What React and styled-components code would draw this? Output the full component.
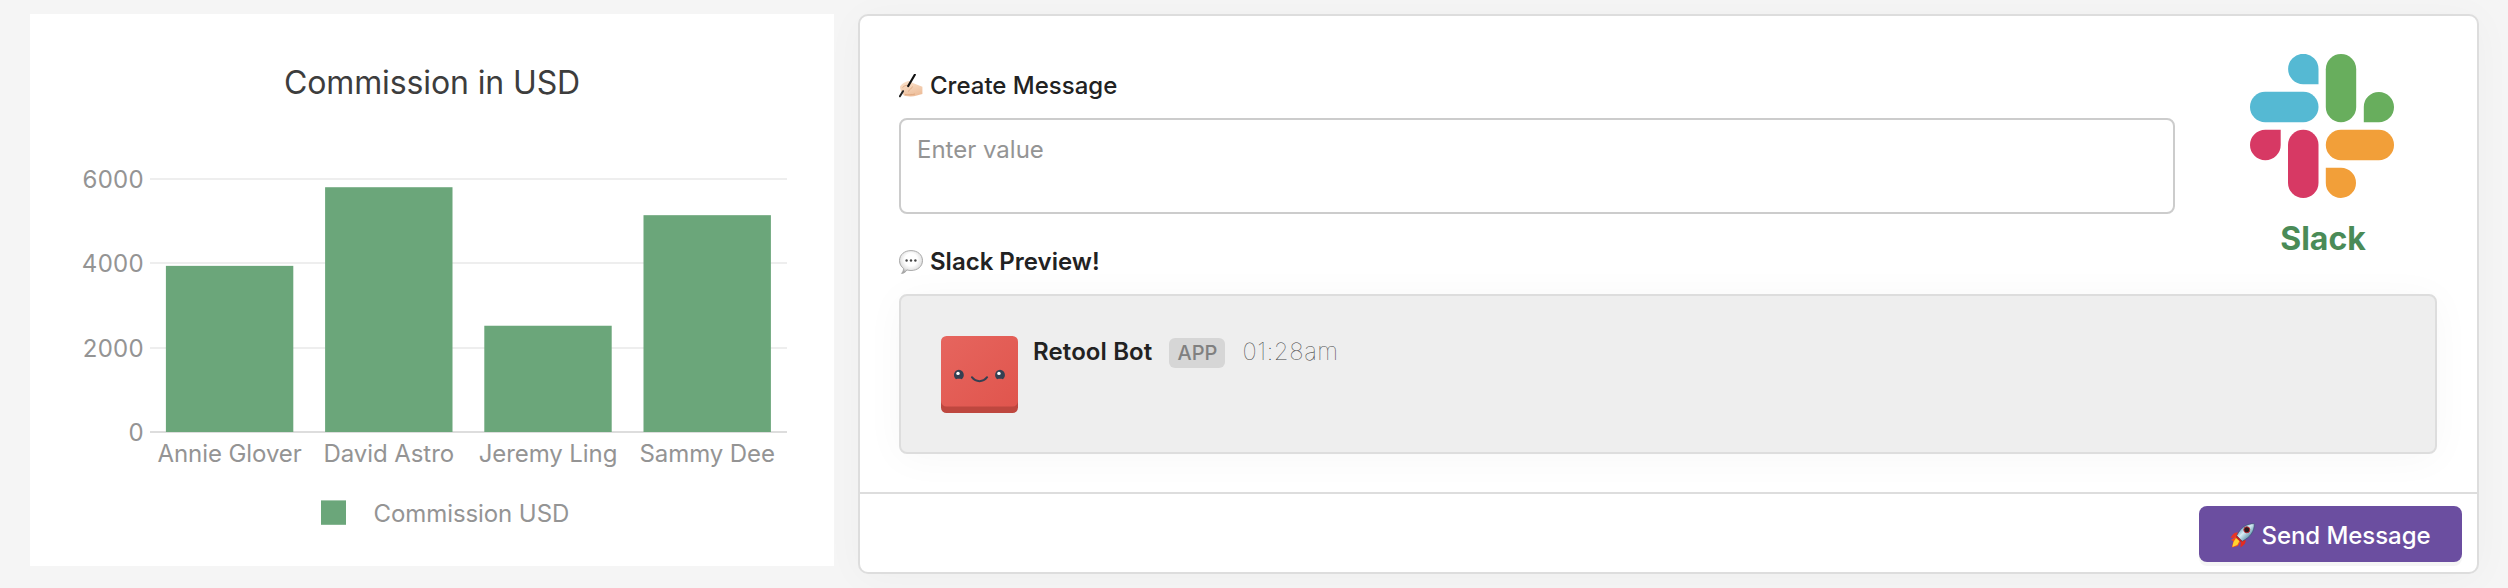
import React from "react";
import styled, { createGlobalStyle } from "styled-components";

const GlobalStyle = createGlobalStyle`
  * { box-sizing: border-box; }
  body {
    margin: 0;
    background: #f5f5f5;
    font-family: Inter, "Liberation Sans", sans-serif;
    color: #222;
  }
`;

const Page = styled.main`
  display: flex;
  align-items: flex-start;
  gap: 24px;
  width: 2508px;
  height: 588px;
  padding: 14px 29px 0 30px;
  overflow: hidden;
`;

const ChartCard = styled.section`
  flex: 0 0 804px;
  height: 552px;
  background: #fff;
`;

const ChartSvg = styled.svg`
  display: block;
`;

const ChartTitle = styled.text`
  font-size: 32px;
  letter-spacing: -0.12px;
  fill: #3d3d3d;
  text-anchor: middle;
`;

const ChartLabel = styled.text`
  font-size: 24px;
  letter-spacing: ${(p) => p.$tracking || "-0.08px"};
  fill: #949494;
  text-anchor: ${(p) => p.$anchor || "middle"};
`;

const MessageCard = styled.section`
  flex: 0 0 1621px;
  height: 560px;
  display: flex;
  flex-direction: column;
  background: #fff;
  border: 2px solid #ddd;
  border-radius: 10px;
  box-shadow: 0 4px 40px rgba(0, 0, 0, 0.03);
`;

const Body = styled.div`
  height: 476px;
  padding: 0 40px 0 39px;
`;

const TopRow = styled.div`
  display: flex;
  height: 278px;
`;

const Fields = styled.div`
  width: 1276px;
  padding-top: 56px;
`;

const Label = styled.div`
  display: flex;
  align-items: center;
  gap: 7px;
  height: 28px;
  margin-bottom: 18px;
  font-size: 24px;
  line-height: 28px;
  font-weight: ${(p) => p.$weight};
`;

const TextArea = styled.textarea`
  display: block;
  width: 100%;
  height: 96px;
  margin: 0 0 34px;
  padding: 16px 16px;
  border: 2px solid #ccc;
  border-radius: 8px;
  background: #fff;
  font: 400 24px/28px Inter, sans-serif;
  resize: none;
  outline: none;
  &::placeholder { color: #949494; opacity: 1; }
`;

const Brand = styled.div`
  display: flex;
  flex-direction: column;
  align-items: center;
  width: 144px;
  margin-left: 75px;
  padding-top: 38px;
`;

const BrandName = styled.div`
  margin-top: 23px;
  padding-left: 2px;
  font-size: 32px;
  line-height: 36px;
  font-weight: 700;
  color: #4a8b57;
`;

const Preview = styled.div`
  display: flex;
  height: 160px;
  padding: 40px;
  border: 2px solid #ddd;
  border-radius: 8px;
  background: #eee;
  box-shadow: 0 4px 40px rgba(0, 0, 0, 0.035);
`;

const Meta = styled.div`
  display: flex;
  align-items: flex-start;
  height: 30px;
  margin: 2px 0 0 15px;
  font-size: 24px;
  line-height: 28px;
`;

const BotName = styled.span`
  font-weight: 600;
  letter-spacing: 0.12px;
`;

const AppTag = styled.span`
  width: 56px;
  height: 30px;
  margin: 0 17px;
  border-radius: 6px;
  background: #d6d6d6;
  color: #808080;
  font-size: 20px;
  font-weight: 500;
  line-height: 30px;
  text-align: center;
`;

const Time = styled.time`
  font-weight: 100;
  letter-spacing: 0.6px;
  color: #444;
`;

const Footer = styled.footer`
  display: flex;
  justify-content: flex-end;
  flex: 1;
  padding: 12px 15px 0 0;
  border-top: 2px solid #ddd;
`;

const SendButton = styled.button`
  display: flex;
  align-items: center;
  justify-content: center;
  gap: 6px;
  width: 263px;
  height: 56px;
  padding: 3px 0 0;
  border: 0;
  border-radius: 8px;
  background: #6b4ea0;
  box-shadow: 0 4px 0 rgba(0, 0, 0, 0.04);
  color: #fff;
  font: 500 24px/28px Inter, sans-serif;
  letter-spacing: -0.06px;
`;

const BASE = 418;
const sales = [
  { name: "Annie Glover", value: 3940 },
  { name: "David Astro", value: 5805 },
  { name: "Jeremy Ling", value: 2520 },
  { name: "Sammy Dee", value: 5142 },
];
const toY = (v) => BASE - (v / 6000) * 253;

function CommissionChart() {
  return (
    <ChartSvg width="804" height="552" viewBox="0 0 804 552">
      <ChartTitle x="402" y="80">Commission in USD</ChartTitle>
      {[6000, 4000, 2000, 0].map((v) => (
        <g key={v}>
          <line x1="120" x2="757" y1={Math.round(toY(v))} y2={Math.round(toY(v))} stroke={v ? "#eee" : "#ddd"} strokeWidth="2" />
          <ChartLabel x="114" y={Math.round(toY(v)) + 9} $anchor="end" $tracking="0.3px">{v}</ChartLabel>
        </g>
      ))}
      {sales.map((s, i) => (
        <g key={s.name}>
          <rect x={135.9 + i * 159.2} y={toY(s.value)} width="127.4" height={BASE - toY(s.value)} fill="#6ba67a" />
          <ChartLabel x={199.6 + i * 159.2} y="448">{s.name}</ChartLabel>
        </g>
      ))}
      <rect x="291" y="486.4" width="25" height="24.4" fill="#6ba67a" />
      <ChartLabel x="343.5" y="508" $anchor="start">Commission USD</ChartLabel>
    </ChartSvg>
  );
}

function SlackLogo() {
  return (
    <svg width="144" height="144" viewBox="0 0 144 144">
      <g fill="#55b9d3">
        <path d="M68.5 30.2H53.2a15.2 15.2 0 1 1 15.3-15.2z" />
        <rect x="0" y="37.8" width="68.5" height="30.4" rx="15.2" />
      </g>
      <g fill="#68ae5d">
        <rect x="75.8" y="0" width="30.4" height="68.2" rx="15.2" />
        <path d="M113.8 68.2V53a15.1 15.1 0 1 1 15.1 15.2z" />
      </g>
      <g fill="#d73964">
        <path d="M30.7 75.8V91a15.35 15.2 0 1 1-15.4-15.2z" />
        <rect x="38" y="75.8" width="30.5" height="68.2" rx="15.2" />
      </g>
      <g fill="#f29f39">
        <rect x="75.8" y="75.8" width="68.2" height="30.4" rx="15.2" />
        <path d="M75.8 113.8H91a15.1 15.1 0 1 1-15.2 15.1z" />
      </g>
    </svg>
  );
}

function WritingHandIcon() {
  return (
    <svg width="24" height="24" viewBox="0 0 24 24">
      <defs>
        <linearGradient id="skin" x1="0" y1="0" x2="0.4" y2="1">
          <stop offset="0" stopColor="#fbe5d0" />
          <stop offset="1" stopColor="#eebf9c" />
        </linearGradient>
      </defs>
      <path d="M1 12.5C3 9.3 6 8 8.5 7.2c2-.6 3.2.2 4.7 1.600 3.200 1.200 7 2.600 10.200 4v7.300c-2 .6-3.800.8-5.400 1.400-3.500 1.300-7.600 1.200-11.500.6-1.600-.3-2.500-1.300-2.300-2.600C2 17.500 1 15 1 12.500z" fill="url(#skin)" />
      <path d="M3.500 13.500c2.200-2.200 4.500-2.700 6.500-1.700M9 17.500c2-2 3.500-3 4.500-5M6 20.500c3 .4 7 .5 10-.5" stroke="#d79d76" strokeWidth=".7" fill="none" />
      <path d="M15.800.8 9.200 12" stroke="#111" strokeWidth="2.200" strokeLinecap="round" />
      <path d="M4 17.200.9 22.300" stroke="#222" strokeWidth="2" strokeLinecap="round" />
    </svg>
  );
}

function SpeechIcon() {
  return (
    <svg width="24" height="24" viewBox="0 0 24 24">
      <defs>
        <radialGradient id="bubble" cx=".5" cy=".4" r=".6">
          <stop offset=".45" stopColor="#fff" />
          <stop offset=".75" stopColor="#e6e6e6" />
          <stop offset="1" stopColor="#aaa" />
        </radialGradient>
      </defs>
      <path d="M12 .6c6.500 0 11.500 4 11.500 10S18.500 20.500 12 20.500c-1.400 0-2.900-.2-4.200-.6-.9 2-2.700 3.300-5.300 3.500 1.400-1.300 2.100-2.900 2-4.900C2 16.600.5 14 .5 10.600c0-6 5-10 11.500-10z" fill="url(#bubble)" stroke="#a4a4a4" strokeWidth=".9" />
      <g fill="#444"><circle cx="7.600" cy="10.500" r="1.200" /><circle cx="12" cy="10.500" r="1.200" /><circle cx="16.400" cy="10.500" r="1.200" /></g>
    </svg>
  );
}

function RocketIcon() {
  return (
    <svg width="25" height="25" viewBox="0 0 25 25">
      <defs>
        <linearGradient id="hull" x1="0" y1="0" x2="1" y2="1">
          <stop offset=".1" stopColor="#347aa6" />
          <stop offset=".45" stopColor="#d8edf4" />
          <stop offset=".75" stopColor="#6295ad" />
          <stop offset="1" stopColor="#31506b" />
        </linearGradient>
      </defs>
      <path d="M8 9.500C4.500 9 2.500 11 .6 15l6-.5z" fill="#ea3525" />
      <path d="M15.500 16.500c.8 3-1 5.500-5 8l.3-6z" fill="#e32b20" />
      <path d="M6 13.500.8 17l2.500 1-1.500 6.500L8 23l3-5z" fill="#f04c22" />
      <path d="m6 15-2.500 4-1.200 5 5-2 2.200-4z" fill="#ffd52f" />
      <path d="M24.200.7c-7.500.1-13 3-17.500 12l5.600 5.500C20.500 14 24.400 8.500 24.200.7z" fill="url(#hull)" stroke="#31516d" strokeWidth=".6" />
      <path d="m6.700 12.700 5.600 5.500-1.700.7-4.800-4.700z" fill="#bc2723" />
      <circle cx="16.800" cy="6.800" r="3" fill="#29191d" stroke="#bd2c36" strokeWidth="1" />
    </svg>
  );
}

function BotAvatar() {
  return (
    <svg width="77" height="77" viewBox="0 0 76 77" preserveAspectRatio="none">
      <defs>
        <linearGradient id="face" x1="0" y1="0" x2="1" y2="1">
          <stop offset="0" stopColor="#e6655e" />
          <stop offset="1" stopColor="#e0554d" />
        </linearGradient>
      </defs>
      <rect y="8" width="76" height="69" rx="5.500" fill="#be473f" />
      <rect width="76" height="70.500" rx="5.500" fill="url(#face)" />
      <g fill="#354052">
        <path d="M14.800 43.200c-1.300-1.100-2-2.500-2-4.200a4.850 5.200 0 0 1 9.700 0c0 1.700-.7 3.100-2 4.200-1.800-.6-3.900-.6-5.700 0z" />
        <path d="M55.400 43.200c-1.300-1.100-2-2.500-2-4.200a4.850 5.200 0 0 1 9.700 0c0 1.700-.7 3.100-2 4.200-1.800-.6-3.900-.6-5.700 0z" />
      </g>
      <circle cx="16.800" cy="37.400" r="1.700" fill="#fff" />
      <circle cx="57.200" cy="37.400" r="1.700" fill="#fff" />
      <path d="M30.500 41.200c4 5.300 11 5.300 15 0" fill="none" stroke="#354052" strokeWidth="2" strokeLinecap="round" />
    </svg>
  );
}

export default function App() {
  return (
    <>
      <GlobalStyle />
      <Page>
        <ChartCard>
          <CommissionChart />
        </ChartCard>
        <MessageCard>
          <Body>
            <TopRow>
              <Fields>
                <Label $weight={500}><WritingHandIcon />Create Message</Label>
                <TextArea placeholder="Enter value" />
                <Label $weight={600}><SpeechIcon />Slack Preview!</Label>
              </Fields>
              <Brand>
                <SlackLogo />
                <BrandName>Slack</BrandName>
              </Brand>
            </TopRow>
            <Preview>
              <BotAvatar />
              <Meta>
                <BotName>Retool Bot</BotName>
                <AppTag>APP</AppTag>
                <Time>01:28am</Time>
              </Meta>
            </Preview>
          </Body>
          <Footer>
            <SendButton><RocketIcon />Send Message</SendButton>
          </Footer>
        </MessageCard>
      </Page>
    </>
  );
}
